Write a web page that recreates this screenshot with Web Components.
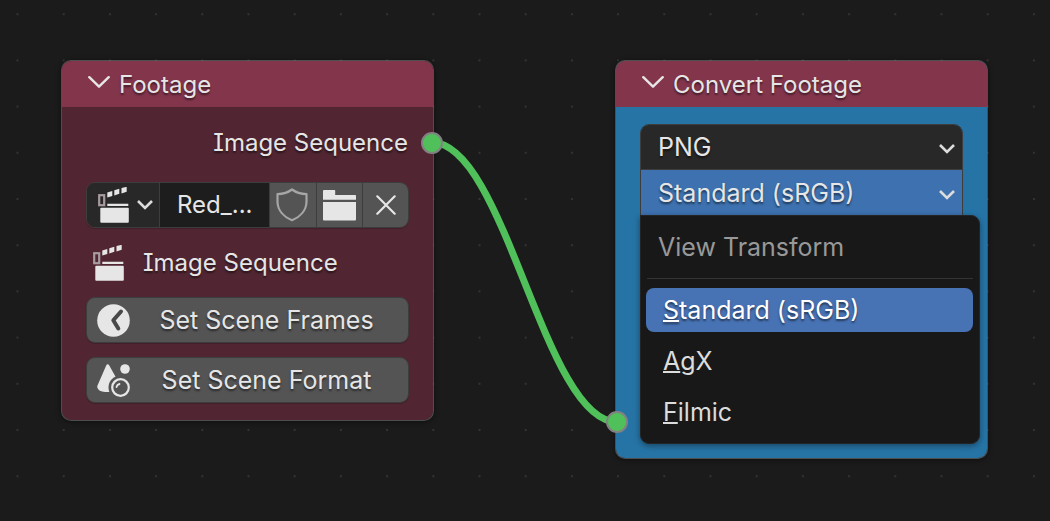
<!DOCTYPE html>
<html lang="en">
<head>
<meta charset="utf-8">
<title>Node Editor</title>
<style>
    body {
        margin: 0;
        background: #1b1b1b;
        color: #e6e6e6;
        font-family: Inter, "Liberation Sans", sans-serif;
        font-size: 25px;
        line-height: 30px;
        font-feature-settings: "cv08";
        --label-size: 24px;
    }
    .footage {
        left: 61px;
        top: 60px;
    }
    .convert {
        left: 615px;
        top: 60px;
    }
    .convert-menu {
        left: 640px;
        top: 215px;
    }
</style>
</head>
<body>
<node-canvas>
    <node-link></node-link>
    <editor-node class="footage" heading="Footage" style="--node-body: #512632">
        <node-output>Image Sequence</node-output>
        <id-block name="Red_..."></id-block>
        <icon-label icon="clapper">Image Sequence</icon-label>
        <node-button icon="previous">Set Scene Frames</node-button>
        <node-button icon="scene">Set Scene Format</node-button>
    </editor-node>
    <editor-node class="convert" heading="Convert Footage" style="--node-body: #2674a6; --node-body-height: 351px">
        <format-fields></format-fields>
        <node-socket slot="input"></node-socket>
    </editor-node>
    <view-menu class="convert-menu"></view-menu>
</node-canvas>

<script>
const icons = {
    clapper: `<svg width="32" height="36" viewBox="0 0 32 36" fill="#e6e6e6">
        <rect x="1.2" y="8.2" width="5" height="10" fill="none" stroke="#a89ba0" stroke-width="2.2"/>
        <path d="M9.3 5.4l5-1.4v5l-5 1.6zM16.3 3.2l5-1.4v5l-5 1.6zM23.5 1.1l5.2-1.3v5l-5.2 1.6zM9.3 16.8h21v2.2h-21z"/>
        <rect x="2.3" y="20.8" width="28.5" height="15" rx="1"/>
    </svg>`,
    shield: `<svg width="32" height="34" viewBox="0 0 32 34" fill="none" stroke="#a6a6a6" stroke-width="2.2" stroke-linejoin="round">
        <path d="M16 1.5C12 4.5 7 6 1.5 6.2V14C1.8 22.5 8 29 16 32.2C24 29 30.2 22.5 30.5 14V6.2C25 6 20 4.5 16 1.5z"/>
    </svg>`,
    folder: `<svg width="33" height="31" viewBox="0 0 33 31" fill="#e6e6e6">
        <path d="M1 0h10.5q.7 0 .7.7V5H32.3q.7 0 .7.7V9.8H0V1q0-1 1-1z"/>
        <path d="M0 12h33v17.5q0 1-1 1H1q-1 0-1-1z"/>
    </svg>`,
    close: `<svg width="20" height="20" viewBox="0 0 20 20" stroke="#e6e6e6" stroke-width="2.2" stroke-linecap="round">
        <path d="M1.3 1.3l17.4 17.4M18.7 1.3L1.3 18.7"/>
    </svg>`,
    chevron: `<svg width="16" height="10" viewBox="0 0 16 10" fill="none" stroke="#dcdcdc" stroke-width="2.6">
        <path d="M1 1l7 7 7-7"/>
    </svg>`,
    collapse: `<svg width="22" height="12" viewBox="0 0 22 12" fill="none" stroke="#e6e6e6" stroke-width="2.4" stroke-linecap="round" stroke-linejoin="round">
        <path d="M1.3 1.2l9.7 9.5L20.7 1.2"/>
    </svg>`,
    previous: `<svg width="33" height="33" viewBox="0 0 33 33">
        <circle cx="16.5" cy="16.5" r="16.3" fill="#e6e6e6"/>
        <path d="M24 7.5L16.3 16.3L21.3 24.5" fill="none" stroke="#484848" stroke-width="4" stroke-linecap="round" stroke-linejoin="round"/>
    </svg>`,
    scene: `<svg width="33" height="33" viewBox="0 0 33 33" fill="#e6e6e6">
        <path d="M10.7 .3Q11.7 .3 12.3 1.4L22 19V28H8Q1.5 27.5 .3 23.5Q.1 22.5 .5 21.5L9.2 1.4Q9.7 .3 10.7 .3z"/>
        <circle cx="23.5" cy="23.5" r="12" fill="#545454"/>
        <circle cx="23.5" cy="23.5" r="8.3" fill="none" stroke="#e6e6e6" stroke-width="2.2"/>
        <path d="M19.5 23a4 4 0 0 1 3-3" fill="none" stroke="#e6e6e6" stroke-width="1.8" stroke-linecap="round"/>
        <circle cx="28" cy="5" r="4.8"/>
    </svg>`
};

const shadow = "0 2px 2px rgba(0, 0, 0, 0.5)";

class NodeCanvas extends HTMLElement {
    constructor() {
        super();
        this.attachShadow({ mode: "open" }).innerHTML = `
        <style>
            :host {
                display: block;
                position: relative;
                min-height: 100vh;
                overflow: hidden;
            }
            .grid {
                position: absolute;
                width: 100%;
                height: 100%;
            }
            ::slotted(*) {
                position: absolute;
            }
        </style>
        <svg class="grid" aria-hidden="true">
            <defs>
                <pattern id="dots" x="16.5" y="13.2" width="46.2" height="46.2" patternUnits="userSpaceOnUse">
                    <circle cx="1" cy="1" r="1" fill="#3a3a3a"/>
                </pattern>
            </defs>
            <rect width="100%" height="100%" fill="url(#dots)"/>
        </svg>
        <slot></slot>`;
    }
}

class NodeLink extends HTMLElement {
    constructor() {
        super();
        this.attachShadow({ mode: "open" }).innerHTML = `
        <style>
            :host {
                inset: 0;
            }
            svg {
                width: 100%;
                height: 100%;
            }
        </style>
        <svg aria-hidden="true">
            <path d="M432 142.5C505 142.5 544 422 617 422" fill="none" stroke="#50c05a" stroke-width="7"/>
        </svg>`;
    }
}

class NodeSocket extends HTMLElement {
    constructor() {
        super();
        this.attachShadow({ mode: "open" }).innerHTML = `
        <style>
            :host {
                display: block;
                box-sizing: border-box;
                width: 22px;
                height: 22px;
                border: 2px solid #828282;
                border-radius: 50%;
                background: #50c05a;
            }
        </style>`;
    }
}

class EditorNode extends HTMLElement {
    connectedCallback() {
        this.attachShadow({ mode: "open" }).innerHTML = `
        <style>
            :host {
                display: block;
                box-sizing: border-box;
                width: 373px;
                border-radius: 10px;
                background: var(--node-body);
                background-clip: padding-box;
                border: 1px solid rgba(150, 150, 150, 0.45);
                box-shadow: 0 1px 5px rgba(0, 0, 0, 0.5);
            }
            header {
                display: flex;
                align-items: center;
                gap: 9px;
                height: 46px;
                padding: 0 26px;
                border-radius: 9px 9px 0 0;
                background: #83354c;
                font-size: var(--label-size);
                text-shadow: ${shadow};
            }
            button {
                display: flex;
                padding: 0 0 4px;
                border: 0;
                background: none;
            }
            h2 {
                margin: 0;
                padding-top: 2px;
                font: inherit;
            }
            .body {
                display: flex;
                flex-direction: column;
                gap: 14px;
                box-sizing: border-box;
                min-height: var(--node-body-height, auto);
                padding: 13px 24px 17px;
            }
            ::slotted([slot="input"]) {
                position: absolute;
                left: -10px;
                bottom: 25px;
            }
        </style>
        <header>
            <button aria-label="Collapse ${this.getAttribute("heading")}">${icons.collapse}</button>
            <h2>${this.getAttribute("heading")}</h2>
        </header>
        <div class="body"><slot></slot></div>
        <slot name="input"></slot>`;
    }
}

class NodeOutput extends HTMLElement {
    constructor() {
        super();
        this.attachShadow({ mode: "open" }).innerHTML = `
        <style>
            :host {
                display: flex;
                position: relative;
                align-items: center;
                justify-content: flex-end;
                height: 45px;
                margin-bottom: 3px;
                padding-right: 1px;
                font-size: var(--label-size);
                text-shadow: ${shadow};
            }
            node-socket {
                position: absolute;
                right: -34px;
            }
        </style>
        <slot></slot>
        <node-socket></node-socket>`;
    }
}

class IdBlock extends HTMLElement {
    connectedCallback() {
        this.attachShadow({ mode: "open" }).innerHTML = `
        <style>
            :host {
                display: flex;
                box-sizing: border-box;
                height: 46px;
                border: 1px solid #3d3d3d;
                border-radius: 9px;
                overflow: hidden;
                box-shadow: 0 1px 1px rgba(0, 0, 0, 0.2);
            }
            button {
                display: flex;
                align-items: center;
                justify-content: center;
                box-sizing: border-box;
                width: 46px;
                padding: 0;
                border: 0;
                border-left: 1px solid #3d3d3d;
                background: #545454;
            }
            .user {
                width: 47px;
                padding-right: 2px;
            }
            .browse {
                gap: 7px;
                width: 72px;
                padding-left: 4px;
                border-left: 0;
                background: #282828;
            }
            input {
                flex: 1;
                min-width: 0;
                padding: 0 0 0 17px;
                border: 0;
                border-left: 1px solid #3d3d3d;
                background: #1d1d1d;
                color: inherit;
                font: inherit;
                font-size: var(--label-size);
                font-feature-settings: inherit;
            }
        </style>
        <button class="browse" aria-label="Browse footage">${icons.clapper}${icons.chevron}</button>
        <input type="text" aria-label="Name" value="${this.getAttribute("name")}">
        <button class="user" aria-label="Fake user">${icons.shield}</button>
        <button aria-label="Open">${icons.folder}</button>
        <button aria-label="Unlink">${icons.close}</button>`;
    }
}

class IconLabel extends HTMLElement {
    connectedCallback() {
        this.attachShadow({ mode: "open" }).innerHTML = `
        <style>
            :host {
                display: flex;
                align-items: center;
                gap: 18px;
                height: 41px;
                padding-left: 7px;
                font-size: var(--label-size);
                text-shadow: ${shadow};
            }
        </style>
        ${icons[this.getAttribute("icon")]}
        <slot></slot>`;
    }
}

class NodeButton extends HTMLElement {
    connectedCallback() {
        this.attachShadow({ mode: "open" }).innerHTML = `
        <style>
            :host {
                display: block;
            }
            button {
                display: flex;
                align-items: center;
                box-sizing: border-box;
                width: 100%;
                height: 46px;
                padding: 0 5px 0 10px;
                border: 1px solid #3d3d3d;
                border-radius: 9px;
                background: #545454;
                box-shadow: 0 1px 1px rgba(0, 0, 0, 0.2);
                color: inherit;
                font: inherit;
                text-shadow: ${shadow};
            }
            span {
                flex: 1;
                text-align: center;
            }
        </style>
        <button>${icons[this.getAttribute("icon")]}<span><slot></slot></span></button>`;
    }
}

class FormatFields extends HTMLElement {
    constructor() {
        super();
        this.attachShadow({ mode: "open" }).innerHTML = `
        <style>
            :host {
                display: block;
                margin-top: 4px;
                border: 1px solid #3d3d3d;
                border-radius: 9px 9px 0 0;
                overflow: hidden;
            }
            div {
                display: grid;
                align-items: center;
                height: 44px;
                background: #282828;
            }
            div + div {
                height: 46px;
                border-top: 1px solid #3d3d3d;
                background: #3d71af;
            }
            select, svg {
                grid-area: 1 / 1;
            }
            select {
                appearance: none;
                width: 100%;
                height: 100%;
                padding: 0 40px 1px 17px;
                border: 0;
                background: none;
                color: inherit;
                font: inherit;
                text-shadow: ${shadow};
            }
            svg {
                justify-self: end;
                margin: 3px 7px 0 0;
                pointer-events: none;
            }
        </style>
        <div>
            <select aria-label="File format"><option>PNG</option></select>
            ${icons.chevron}
        </div>
        <div>
            <select aria-label="View transform">
                <option>Standard (sRGB)</option>
                <option>AgX</option>
                <option>Filmic</option>
            </select>
            ${icons.chevron}
        </div>`;
    }
}

class ViewMenu extends HTMLElement {
    constructor() {
        super();
        this.attachShadow({ mode: "open" }).innerHTML = `
        <style>
            :host {
                display: block;
                box-sizing: border-box;
                width: 340px;
                padding: 9px 6px 9px 5px;
                border: 1px solid #242424;
                border-radius: 0 9px 9px 9px;
                background: #181818;
                box-shadow: 0 2px 6px rgba(0, 0, 0, 0.4);
            }
            h3 {
                margin: 0;
                padding: 7px 12px;
                color: #989898;
                font: inherit;
            }
            hr {
                margin: 9px 0 9px 1px;
                border: 0;
                border-top: 1px solid #333;
            }
            .items {
                display: flex;
                flex-direction: column;
                gap: 7px;
            }
            button {
                height: 44px;
                padding: 0 17px;
                border: 0;
                border-radius: 8px;
                background: none;
                color: #dcdcdc;
                font: inherit;
                text-align: left;
            }
            button.active {
                background: #4772b3;
                color: #fff;
                text-shadow: ${shadow};
            }
            u {
                text-decoration-thickness: 2px;
                text-decoration-skip-ink: none;
                text-underline-offset: 1px;
            }
        </style>
        <h3>View Transform</h3>
        <hr>
        <div class="items" role="menu">
            <button role="menuitem" class="active"><u>S</u>tandard (sRGB)</button>
            <button role="menuitem"><u>A</u>gX</button>
            <button role="menuitem"><u>F</u>ilmic</button>
        </div>`;
    }
}

customElements.define("node-canvas", NodeCanvas);
customElements.define("node-link", NodeLink);
customElements.define("node-socket", NodeSocket);
customElements.define("editor-node", EditorNode);
customElements.define("node-output", NodeOutput);
customElements.define("id-block", IdBlock);
customElements.define("icon-label", IconLabel);
customElements.define("node-button", NodeButton);
customElements.define("format-fields", FormatFields);
customElements.define("view-menu", ViewMenu);
</script>
</body>
</html>
